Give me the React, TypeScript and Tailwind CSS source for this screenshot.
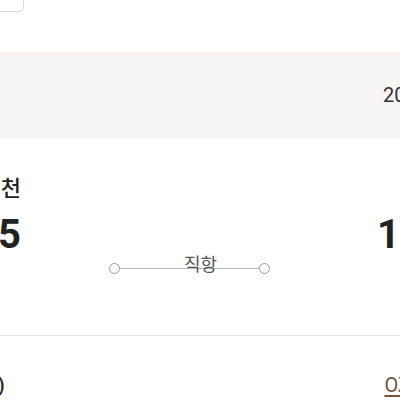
import React from 'react';

export default function App() {
  return (
    <div
      className="w-[400px] h-[400px] overflow-hidden bg-white text-[#222]"
      style={{ fontFamily: 'Roboto, "Noto Sans CJK KR", sans-serif' }}
    >
      {/* top button (cut off) */}
      <div className="h-[52px] flex items-start">
        <div className="w-[80px] h-[40px] -mt-[28px] -ml-[56px] border border-[#d9d9d9] rounded-[5px] bg-white shrink-0" />
      </div>

      {/* date band */}
      <div className="h-[86px] bg-[#f6f5f4] flex items-center pl-[383px] whitespace-nowrap">
        <span className="text-[20px] text-[#333]">2025.03.15</span>
      </div>

      {/* route */}
      <div className="h-[198px] border-b border-[#e6e6e6] flex items-start pt-[37px]">
        <div className="w-[80px] shrink-0 -ml-[59px] flex flex-col items-end">
          <span className="text-[22px] leading-[28px] font-medium whitespace-nowrap">
            <span className="mr-[4px]">인</span>천
          </span>
          <span className="text-[40px] leading-[48px] font-bold mt-[8px] whitespace-nowrap">05:25</span>
        </div>
        <div className="flex-1 relative pt-[88px]">
          <div className="ml-[88px] w-[161px] flex items-center">
            <span className="w-[11px] h-[11px] rounded-full border border-[#9a9a9a] bg-white shrink-0" />
            <span className="flex-1 h-px bg-[#b5b5b5]" />
            <span className="w-[11px] h-[11px] rounded-full border border-[#9a9a9a] bg-white shrink-0" />
          </div>
          <span className="absolute left-1/2 -translate-x-1/2 top-[78px] text-[18px] leading-[24px] text-[#555]">
            직항
          </span>
        </div>
        <div className="w-[100px] shrink-0 -mr-[80px] flex flex-col items-end">
          <span className="text-[22px] leading-[28px] font-medium whitespace-nowrap">도쿄</span>
          <span className="text-[40px] leading-[48px] font-bold mt-[8px] whitespace-nowrap">10:05</span>
        </div>
      </div>

      {/* bottom row */}
      <div className="flex items-center justify-between pt-[34px] whitespace-nowrap">
        <span className="text-[20px] font-medium -ml-[46px]">(편도)</span>
        <span className="text-[20px] text-[#70553a] underline underline-offset-[3px] -mr-[10px]">OZ</span>
      </div>
    </div>
  );
}
